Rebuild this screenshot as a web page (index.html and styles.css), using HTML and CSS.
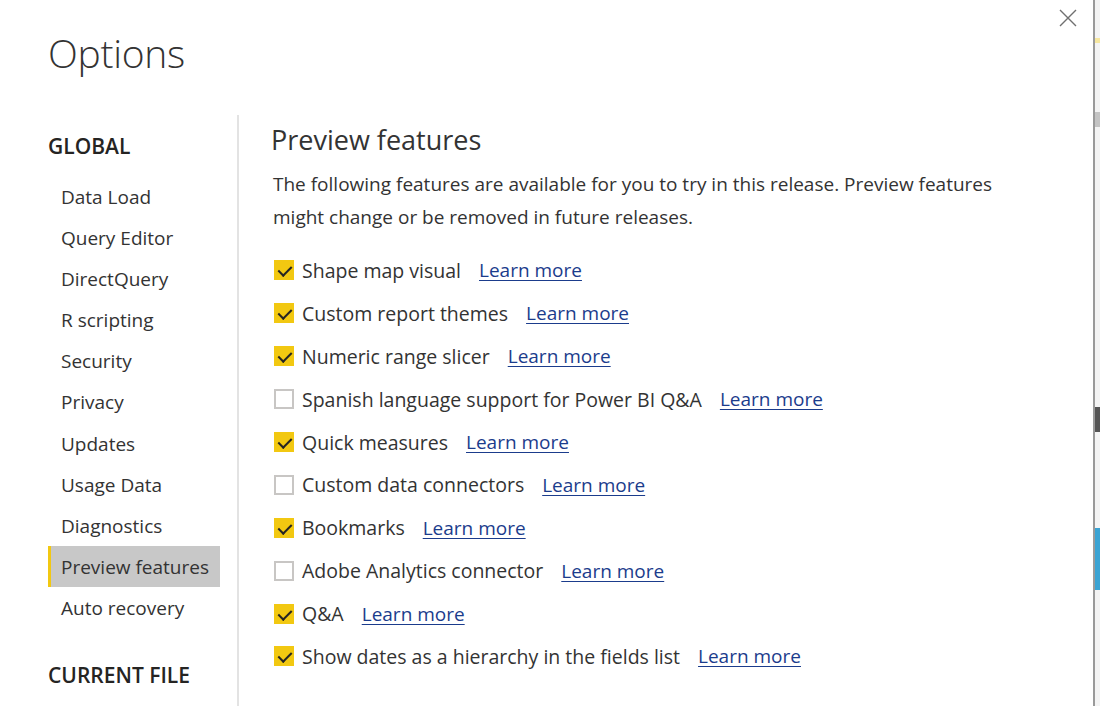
FILE: index.html
```html
<!DOCTYPE html>
<html>
<head>
<meta charset="utf-8">
<link rel="stylesheet" href="styles.css">
</head>
<body>
<div class="screen">
  <div class="dialog">
    <button class="close" aria-label="Close">
      <svg width="20" height="20" viewBox="0 0 20 20"><path d="M2 2 L18 18 M18 2 L2 18" stroke="#707070" stroke-width="1.4" fill="none"/></svg>
    </button>
    <h1 class="title">Options</h1>
    <div class="body">
      <nav class="nav">
        <div class="nav-head">GLOBAL</div>
        <div class="nav-item">Data Load</div>
        <div class="nav-item">Query Editor</div>
        <div class="nav-item">DirectQuery</div>
        <div class="nav-item">R scripting</div>
        <div class="nav-item">Security</div>
        <div class="nav-item">Privacy</div>
        <div class="nav-item">Updates</div>
        <div class="nav-item">Usage Data</div>
        <div class="nav-item">Diagnostics</div>
        <div class="nav-item active">Preview features</div>
        <div class="nav-item">Auto recovery</div>
        <div class="nav-head second">CURRENT FILE</div>
      </nav>
      <main class="content">
        <h2 class="heading">Preview features</h2>
        <p class="desc">The following features are available for you to try in this release. Preview features might change or be removed in future releases.</p>
        <ul class="features">
          <li class="feature"><span class="box on"></span><span class="label">Shape map visual</span><a href="#" class="learn">Learn more</a></li>
          <li class="feature"><span class="box on"></span><span class="label">Custom report themes</span><a href="#" class="learn">Learn more</a></li>
          <li class="feature"><span class="box on"></span><span class="label">Numeric range slicer</span><a href="#" class="learn">Learn more</a></li>
          <li class="feature"><span class="box"></span><span class="label">Spanish language support for Power BI Q&amp;A</span><a href="#" class="learn">Learn more</a></li>
          <li class="feature"><span class="box on"></span><span class="label">Quick measures</span><a href="#" class="learn">Learn more</a></li>
          <li class="feature"><span class="box"></span><span class="label">Custom data connectors</span><a href="#" class="learn">Learn more</a></li>
          <li class="feature"><span class="box on"></span><span class="label">Bookmarks</span><a href="#" class="learn">Learn more</a></li>
          <li class="feature"><span class="box"></span><span class="label">Adobe Analytics connector</span><a href="#" class="learn">Learn more</a></li>
          <li class="feature"><span class="box on"></span><span class="label">Q&amp;A</span><a href="#" class="learn">Learn more</a></li>
          <li class="feature"><span class="box on"></span><span class="label">Show dates as a hierarchy in the fields list</span><a href="#" class="learn">Learn more</a></li>
        </ul>
      </main>
    </div>
  </div>
  <div class="behind">
    <span class="bit yellow"></span>
    <span class="bit grey"></span>
    <span class="bit dark"></span>
    <span class="bit blue"></span>
  </div>
</div>
</body>
</html>
```

FILE: styles.css
```css
* { box-sizing: border-box; }
html, body { margin: 0; padding: 0; }
body {
  width: 1100px;
  height: 706px;
  overflow: hidden;
  background: #ffffff;
  font-family: "Open Sans", "Noto Sans", "Liberation Sans", sans-serif;
  color: #333333;
}
.screen {
  display: flex;
  width: 1100px;
  height: 706px;
}
.dialog {
  position: relative;
  width: 1095px;
  height: 706px;
  background: #ffffff;
  border-right: 2px solid #9a9a9a;
  padding-left: 48px;
  flex: none;
}
.close {
  position: absolute;
  top: 8px;
  left: 1058px;
  width: 20px;
  height: 20px;
  padding: 0;
  border: 0;
  background: transparent;
}
.close svg { display: block; }
.title {
  margin: 0;
  padding-top: 29px;
  height: 115px;
  font-size: 39px;
  line-height: 48px;
  font-weight: 300;
  color: #333333;
  letter-spacing: -0.3px;
}
.body {
  display: flex;
  height: 591px;
}
.nav {
  width: 191px;
  flex: none;
  border-right: 2px solid #e3e3e3;
  padding-top: 16px;
}
.nav-head {
  height: 30px;
  line-height: 30px;
  font-size: 21px;
  font-weight: 600;
  color: #252423;
  margin-bottom: 15px;
}
.nav-head.second { margin-top: 32px; margin-bottom: 0; }
.nav-item {
  width: 172px;
  height: 41.1px;
  line-height: 42px;
  font-size: 19px;
  padding-left: 10px;
  color: #333333;
  border-left: 3px solid transparent;
}
.nav-item.active {
  background: #c8c8c8;
  border-left-color: #f2c811;
}
.content {
  flex: 1;
  padding-left: 33px;
  padding-top: 7px;
}
.heading {
  margin: 0;
  font-size: 27px;
  line-height: 36px;
  font-weight: 400;
  color: #333333;
  margin-left: -1px;
}
.desc {
  margin: 10px 0 15px 1px;
  width: 745px;
  font-size: 19px;
  line-height: 33px;
  color: #333333;
}
.features {
  list-style: none;
  margin: 0;
  padding: 0 0 0 2px;
}
.feature {
  display: flex;
  align-items: center;
  height: 42.9px;
  font-size: 19.5px;
}
.box {
  width: 20px;
  height: 20px;
  flex: none;
  border: 2px solid #c8c6c4;
  background: #ffffff;
  margin-right: 8px;
  position: relative;
}
.box.on {
  background: #f2c811;
  border-color: #f2c811;
}
.box.on::after {
  content: "";
  position: absolute;
  left: 5px;
  top: 1px;
  width: 6px;
  height: 11px;
  border-right: 2.6px solid #252423;
  border-bottom: 2.6px solid #252423;
  transform: rotate(45deg);
}
.label {
  color: #333333;
  margin-right: 18px;
}
.learn {
  color: #1b3c8c;
  font-size: 19px;
  text-decoration: underline;
  text-underline-offset: 3px;
}
.behind {
  flex: 1;
  height: 706px;
  background: #f4f4f4;
  display: flex;
  flex-direction: column;
}
.bit { display: block; width: 100%; }
.yellow { margin-top: 38px; height: 5px; background: #f6e7a0; }
.grey { margin-top: 69px; height: 15px; background: #c4c4c4; }
.dark { margin-top: 280px; height: 25px; background: #555555; }
.blue { margin-top: 96px; height: 62px; background: #3aa3d3; }
```
